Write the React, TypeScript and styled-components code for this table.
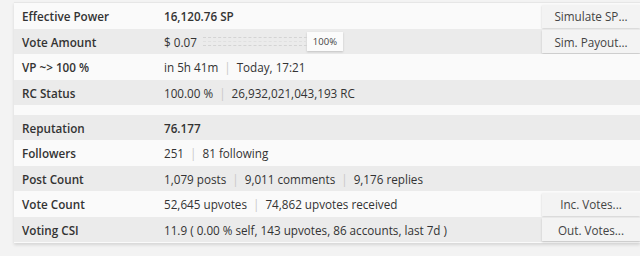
import styled, { createGlobalStyle } from "styled-components";

const Global = createGlobalStyle`
  body {
    margin: 0;
    background: #f3f3f3;
    font-family: "Open Sans", "Liberation Sans", sans-serif;
    color: #333;
  }
`;

const Page = styled.div`
  width: 640px;
  height: 256px;
  overflow: hidden;
  padding: 2px 0 0 14px;
  box-sizing: border-box;
`;

const Card = styled.div`
  background: #fafafa;
  border-top: 1px solid #e6e6e6;
  box-shadow: 0 2px 3px rgba(0, 0, 0, 0.12);
  padding-bottom: 1px;
`;

const Group = styled.div`
  display: flex;
  flex-direction: column;
`;

const Spacer = styled.div`
  height: 10px;
`;

const Row = styled.div<{ $shade?: boolean }>`
  display: grid;
  grid-template-columns: 142px 1fr auto;
  align-items: center;
  height: ${p => (p.$shade ? 25 : 26)}px;
  padding-left: 8px;
  background: ${p => (p.$shade ? "#ebebeb" : "#fafafa")};
  font-size: 11.7px;
`;

const Label = styled.div`
  font-weight: 600;
  color: #333;
`;

const Value = styled.div<{ $strong?: boolean }>`
  display: flex;
  align-items: center;
  font-weight: ${p => (p.$strong ? 600 : 400)};
  color: #333;
  white-space: nowrap;
`;

const Sep = styled.span`
  color: #c8c8c8;
  margin: 0 6px;
`;

const Button = styled.button`
  width: 98px;
  height: 23px;
  border: none;
  background: #f3f3f3;
  box-shadow: 0 1px 2px rgba(0, 0, 0, 0.18);
  font-family: inherit;
  font-size: 11.7px;
  color: #444;
  cursor: pointer;
  padding: 0;
`;

const Bar = styled.div`
  display: flex;
  align-items: center;
  margin-left: 6px;
`;

const Track = styled.div`
  width: 104px;
  height: 7px;
  border-top: 1px dashed #d4d4d4;
  border-bottom: 1px dashed #d4d4d4;
  position: relative;
  &::after {
    content: "";
    position: absolute;
    left: 0;
    right: 0;
    top: 3px;
    border-top: 1px dashed #e0e0e0;
  }
`;

const Pct = styled.span`
  background: #fbfbfb;
  box-shadow: 0 1px 2px rgba(0, 0, 0, 0.18);
  font-size: 9.5px;
  padding: 3px 6px;
  color: #444;
`;

export default function App() {
  return (
    <Page>
      <Global />
      <Card>
        <Group>
          <Row>
            <Label>Effective Power</Label>
            <Value $strong>16,120.76 SP</Value>
            <Button>Simulate SP...</Button>
          </Row>
          <Row $shade>
            <Label>Vote Amount</Label>
            <Value>
              $ 0.07
              <Bar>
                <Track />
                <Pct>100%</Pct>
              </Bar>
            </Value>
            <Button>Sim. Payout...</Button>
          </Row>
          <Row>
            <Label>VP ~&gt; 100 %</Label>
            <Value>
              in 5h 41m<Sep>|</Sep>Today, 17:21
            </Value>
          </Row>
          <Row $shade>
            <Label>RC Status</Label>
            <Value>
              100.00 %<Sep>|</Sep>26,932,021,043,193 RC
            </Value>
          </Row>
        </Group>
        <Spacer />
        <Group>
          <Row $shade>
            <Label>Reputation</Label>
            <Value $strong>76.177</Value>
          </Row>
          <Row>
            <Label>Followers</Label>
            <Value>
              251<Sep>|</Sep>81 following
            </Value>
          </Row>
          <Row $shade>
            <Label>Post Count</Label>
            <Value>
              1,079 posts<Sep>|</Sep>9,011 comments<Sep>|</Sep>9,176 replies
            </Value>
          </Row>
          <Row>
            <Label>Vote Count</Label>
            <Value>
              52,645 upvotes<Sep>|</Sep>74,862 upvotes received
            </Value>
            <Button>Inc. Votes...</Button>
          </Row>
          <Row $shade>
            <Label>Voting CSI</Label>
            <Value>11.9 ( 0.00 % self, 143 upvotes, 86 accounts, last 7d )</Value>
            <Button>Out. Votes...</Button>
          </Row>
        </Group>
      </Card>
    </Page>
  );
}
